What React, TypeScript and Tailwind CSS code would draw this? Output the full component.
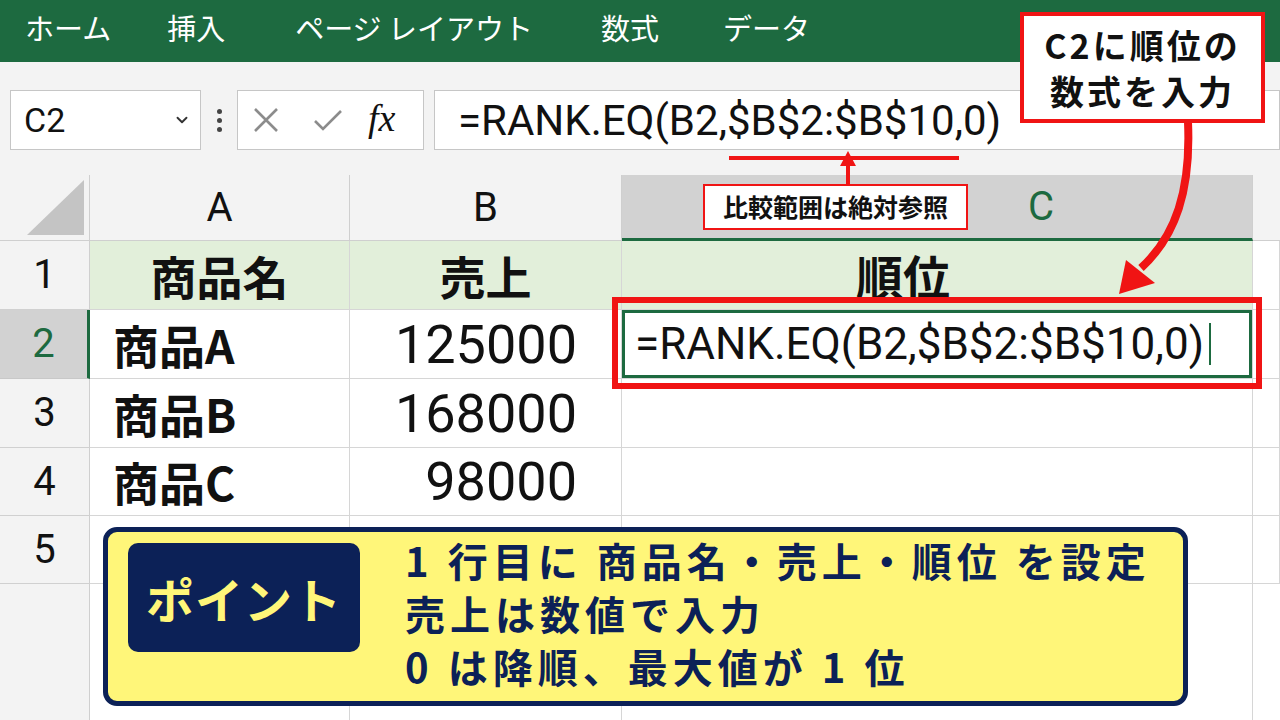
import React from "react";
import { ChevronDown } from "lucide-react";

const UI = "font-['Roboto','Noto_Sans_CJK_JP',sans-serif]";
const JP = "font-['Noto_Sans_CJK_JP','Noto_Sans',sans-serif]";

function Cell({ className = "", children }: { className?: string; children?: React.ReactNode }) {
  return (
    <div className={"relative flex items-center border-r border-b border-[#d6d6d6] " + className}>
      {children}
    </div>
  );
}

function RowHead({ n, active = false, className = "" }: { n?: string; active?: boolean; className?: string }) {
  return (
    <div
      className={
        "flex items-center justify-center border-b text-[40px] " +
        UI +
        (active
          ? " bg-[#d2d2d2] text-[#1d6a40] border-b-[#c8c8c8] border-r-[3px] border-r-[#1d6a40]"
          : " bg-[#f3f3f3] text-[#111] border-b-[#d0d0d0] border-r border-r-[#cfcfcf]") +
        " " +
        className
      }
    >
      {n}
    </div>
  );
}

export default function App() {
  const bold = JP + " font-bold text-[#111]";
  return (
    <div className="relative w-[1280px] h-[720px] overflow-hidden bg-[#f3f3f3]">
      {/* Ribbon */}
      <div className={"flex items-center h-[62px] bg-[#1d6a40] text-white text-[29px] pb-[6px] " + JP}>
        <span className="ml-[25px]">ホーム</span>
        <span className="ml-[56px]">挿入</span>
        <span className="ml-[70px]">ページ レイアウト</span>
        <span className="ml-[68px]">数式</span>
        <span className="ml-[64px]">データ</span>
      </div>

      {/* Formula bar */}
      <div className="flex items-start h-[113px] pt-[28px] bg-[#f3f3f3]">
        <div className={"ml-[10px] w-[191px] h-[60px] bg-white border border-[#c6c6c6] flex items-center pl-[13px] text-[34px] text-[#111] " + UI}>
          <span>C2</span>
          <ChevronDown className="ml-auto mr-[9px] text-[#333]" size={18} strokeWidth={2.5} />
        </div>
        <div className="w-[36px] h-[60px] flex flex-col items-center justify-center gap-[4px]">
          <span className="w-[5px] h-[5px] rounded-full bg-[#444]" />
          <span className="w-[5px] h-[5px] rounded-full bg-[#444]" />
          <span className="w-[5px] h-[5px] rounded-full bg-[#444]" />
        </div>
        <div className="w-[187px] h-[60px] bg-white border border-[#c6c6c6] flex items-center">
          <svg width="28" height="28" viewBox="0 0 28 28" className="ml-[14px]">
            <path d="M3 3 L25 25 M25 3 L3 25" stroke="#8c8c8c" strokeWidth="2.6" fill="none" />
          </svg>
          <svg width="32" height="26" viewBox="0 0 32 26" className="ml-[32px]">
            <path d="M3 14 L11 22 L29 4" stroke="#8c8c8c" strokeWidth="2.6" fill="none" />
          </svg>
          <span className="ml-[24px] text-[38px] italic text-[#111] font-['Liberation_Serif',serif] leading-none pb-[4px]">fx</span>
        </div>
        <div className={"ml-[10px] flex-1 h-[60px] bg-white border border-[#c6c6c6] flex items-center pl-[23px] text-[42px] text-[#111] " + UI}>
          <span>=RANK.EQ(B2,</span>
          <span className="relative">
            $B$2:$B$10
            <span className="absolute left-[2px] right-[-4px] bottom-[-8px] h-[4px] bg-[#f01414]" />
          </span>
          <span>,0)</span>
        </div>
      </div>

      {/* Grid */}
      <div className="grid grid-cols-[90px_260px_272px_631px_27px] grid-rows-[66px_69px_69px_69px_68px_68px_136px]">
        {/* header row */}
        <div className="relative border-r border-b border-[#cfcfcf] bg-[#f3f3f3]">
          <svg width="90" height="66" viewBox="0 0 90 66" className="absolute left-0 top-0">
            <polygon points="84,5 84,60 27,60" fill="#c4c4c4" />
          </svg>
        </div>
        <div className={"flex items-center justify-center border-r border-b border-[#cfcfcf] bg-[#f3f3f3] text-[40px] text-[#111] " + UI}>A</div>
        <div className={"flex items-center justify-center border-r border-b border-[#cfcfcf] bg-[#f3f3f3] text-[40px] text-[#111] " + UI}>B</div>
        <div className={"flex items-center pl-[406px] border-r border-r-[#cfcfcf] border-b-[3px] border-b-[#1d6a40] bg-[#d2d2d2] text-[40px] text-[#1d6a40] " + UI}>
          C
        </div>
        <div className="border-b border-[#cfcfcf] bg-[#f3f3f3]" />

        {/* row 1 */}
        <RowHead n="1" />
        <Cell className={"justify-center bg-[#e2efda] text-[46px] " + bold}>商品名</Cell>
        <Cell className={"justify-center bg-[#e2efda] text-[46px] " + bold}>売上</Cell>
        <Cell className={"pl-[234px] bg-[#e2efda] text-[47px] " + bold}>順位</Cell>
        <Cell className="bg-white" />

        {/* row 2 */}
        <RowHead n="2" active />
        <Cell className={"pl-[23px] bg-white text-[46px] " + bold}>商品A</Cell>
        <Cell className={"justify-end pr-[44px] bg-white text-[54px] text-[#111] " + UI}>125000</Cell>
        <Cell className={"z-10 pl-[13px] bg-white text-[44px] text-[#111] shadow-[inset_0_0_0_3px_#1d6a40] " + UI}>
          <span>=RANK.EQ(B2,$B$2:$B$10,0)</span>
          <span className="ml-[5px] w-[2px] h-[42px] bg-[#1d6a40]" />
          <span className="absolute left-[-10px] top-[-13px] right-[-10px] bottom-[-11px] border-[6px] border-[#f01414]" />
        </Cell>
        <Cell className="bg-white" />

        {/* row 3 */}
        <RowHead n="3" />
        <Cell className={"pl-[23px] bg-white text-[46px] " + bold}>商品B</Cell>
        <Cell className={"justify-end pr-[44px] bg-white text-[54px] text-[#111] " + UI}>168000</Cell>
        <Cell className="bg-white" />
        <Cell className="bg-white" />

        {/* row 4 */}
        <RowHead n="4" />
        <Cell className={"pl-[23px] bg-white text-[46px] " + bold}>商品C</Cell>
        <Cell className={"justify-end pr-[44px] bg-white text-[54px] text-[#111] " + UI}>98000</Cell>
        <Cell className="bg-white" />
        <Cell className="bg-white" />

        {/* row 5 */}
        <RowHead n="5" />
        <Cell className="bg-white" />
        <Cell className="bg-white" />
        <Cell className="bg-white" />
        <Cell className="bg-white" />

        {/* blank area below */}
        <div className="bg-[#f3f3f3] border-r border-[#cfcfcf]" />
        <div className="bg-white border-r border-[#d6d6d6]" />
        <div className="bg-white border-r border-[#d6d6d6]" />
        <div className="bg-white border-r border-[#d6d6d6]" />
        <div className="bg-white" />
      </div>

      {/* Label: 比較範囲は絶対参照 */}
      <div className={"absolute z-20 left-[703px] top-[184px] w-[265px] h-[46px] bg-white border-2 border-[#f01414] flex items-center justify-center text-[25px] " + bold}>
        比較範囲は絶対参照
      </div>

      {/* Callout */}
      <div className={"absolute z-20 left-[1020px] top-[12px] w-[245px] h-[111px] bg-white border-[4px] border-[#f01414] flex flex-col items-center justify-center text-[34px] leading-[46px] tracking-[3px] " + bold}>
        <span>C2に順位の</span>
        <span>数式を入力</span>
      </div>

      {/* Arrows */}
      <svg className="absolute z-20 left-0 top-0 pointer-events-none" width="1280" height="720" viewBox="0 0 1280 720">
        <path d="M848 184 L848 164" stroke="#f01414" strokeWidth="4" fill="none" />
        <polygon points="848,151 840,166 856,166" fill="#f01414" />
        <path d="M1188 122 C1191 190 1176 236 1141 268" stroke="#f01414" strokeWidth="8" fill="none" />
        <polygon points="1119,294 1126,260 1155,283" fill="#f01414" />
      </svg>

      {/* Point box */}
      <div className="absolute z-20 left-[103px] top-[527px] w-[1085px] h-[179px] rounded-[14px] border-[5px] border-[#0c2157] bg-[#fff679] flex items-start pl-[20px] pt-[11px]">
        <div className={"w-[232px] h-[109px] rounded-[10px] bg-[#0c2157] flex items-center justify-center text-[48px] tracking-[1px] font-bold text-[#fff679] " + JP}>
          ポイント
        </div>
        <div className={"ml-[45px] mt-[-9px] flex flex-col text-[40px] leading-[53px] tracking-[5px] font-bold text-[#0c2157] " + JP}>
          <span>1 行目に 商品名・売上・順位 を設定</span>
          <span>売上は数値で入力</span>
          <span>0 は降順、最大値が 1 位</span>
        </div>
      </div>
    </div>
  );
}
